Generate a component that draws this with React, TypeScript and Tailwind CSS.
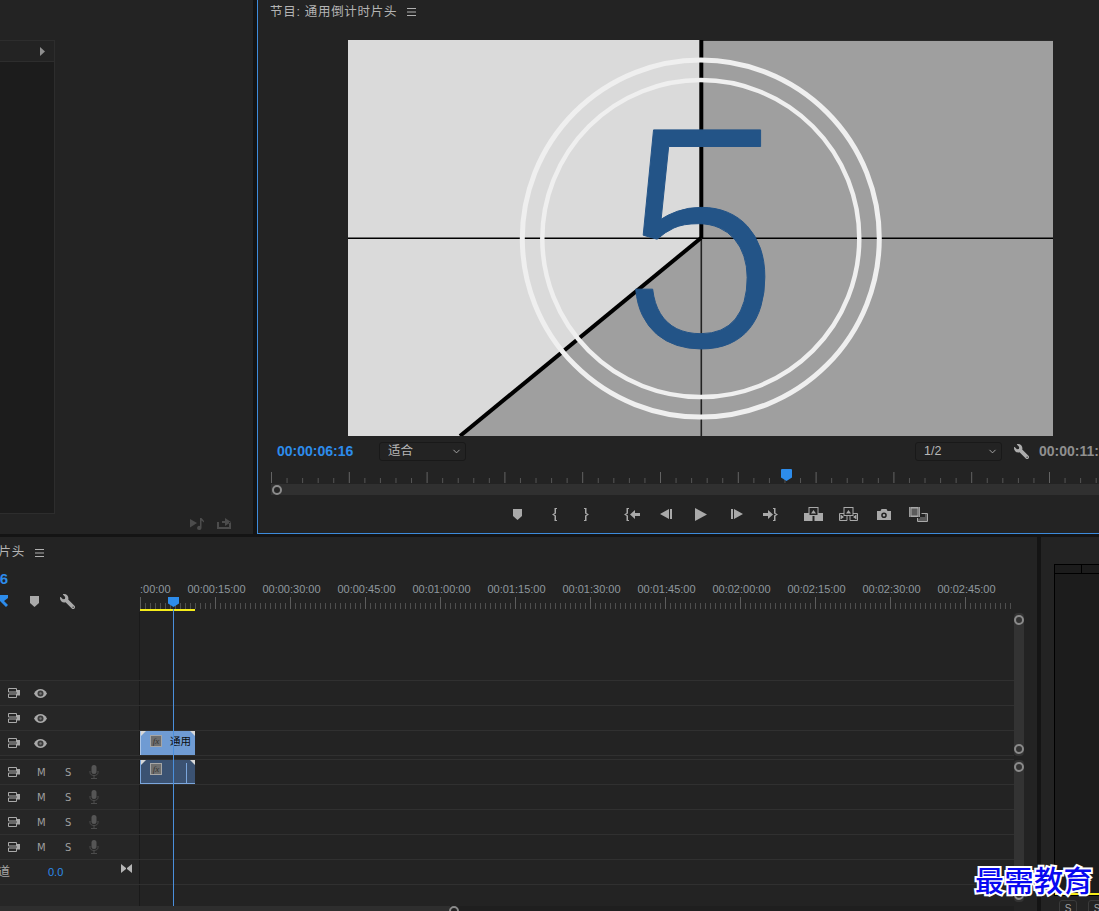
import React from "react";
import { ChevronDown } from "lucide-react";
import { FaWrench } from "react-icons/fa";

const F = "#a9a9a9";
const BG = "#232323";

const sans = "font-['Liberation_Sans','Noto_Sans_CJK_SC',sans-serif]";

function Marker({ className = "" }: { className?: string }) {
  return (
    <svg width="9" height="11" viewBox="0 0 9 11" className={className}>
      <path d="M0 0H9V7L4.5 11 0 7Z" fill={F} />
    </svg>
  );
}

function Hamburger({ className = "" }: { className?: string }) {
  return (
    <svg width="9" height="8" viewBox="0 0 9 8" className={className}>
      <path d="M0 .5H9M0 4H9M0 7.5H9" stroke="#b0b0b0" strokeWidth="1" />
    </svg>
  );
}

function Transport() {
  return (
    <div className="flex items-center h-[38px] pl-[255px]">
      <Marker />
      <svg width="5" height="13" viewBox="0 0 5 13" className="ml-[30px]">
        <path d="M5 0V1H4V5.5L2 6.5 4 7.5V12H5V13H2.5V8L0 6.5 2.5 5V0Z" fill={F} />
      </svg>
      <svg width="5" height="13" viewBox="0 0 5 13" className="ml-[27px]">
        <path d="M0 0V1H1V5.5L3 6.5 1 7.5V12H0V13H2.5V8L5 6.5 2.5 5V0Z" fill={F} />
      </svg>
      <svg width="16" height="13" viewBox="0 0 16 13" className="ml-[35px]">
        <path d="M5 0V1H4V5.5L2 6.5 4 7.5V12H5V13H2.5V8L0 6.5 2.5 5V0ZM6 6.5L11 2V5H16V8H11V11Z" fill={F} />
      </svg>
      <svg width="12" height="10" viewBox="0 0 12 10" className="ml-[20px]">
        <path d="M0 5L9 0V10ZM10 0H12V10H10Z" fill={F} />
      </svg>
      <svg width="12" height="13" viewBox="0 0 12 13" className="ml-[23px]">
        <path d="M0 0L12 6.5 0 13Z" fill={F} />
      </svg>
      <svg width="12" height="10" viewBox="0 0 12 10" className="ml-[24px]">
        <path d="M0 0H2V10H0ZM3 0L12 5 3 10Z" fill={F} />
      </svg>
      <svg width="15" height="13" viewBox="0 0 15 13" className="ml-[20px]">
        <path d="M10 6.5L5 2V5H0V8H5V11ZM10 0V1H11V5.5L13 6.5 11 7.5V12H10V13H12.5V8L15 6.5 12.5 5V0Z" fill={F} />
      </svg>
      <svg width="19" height="14" viewBox="0 0 19 14" className="ml-[26px]">
        <path d="M0 6H8.5V14H0ZM10.5 6H19V14H10.5Z" fill={F} />
        <rect x="5" y=".5" width="9" height="8" fill={BG} stroke={F} />
        <path d="M7 6.5L9.5 3 12 6.5Z" fill={F} />
      </svg>
      <svg width="19" height="14" viewBox="0 0 19 14" className="ml-[16px]">
        <path d="M.5 6.5H8V13.5H.5ZM11 6.5H18.5V13.5H11Z" fill={BG} stroke={F} />
        <path d="M1.5 7.5L5 10 1.5 12.5ZM17.5 7.5L14 10 17.5 12.5Z" fill={F} />
        <rect x="5" y=".5" width="9" height="8" fill={BG} stroke={F} />
        <path d="M7 6.5L9.5 3 12 6.5Z" fill={F} />
      </svg>
      <svg width="14" height="11" viewBox="0 0 14 11" className="ml-[19px]">
        <path
          fillRule="evenodd"
          d="M0 2H3.5L4.5 0H9.5L10.5 2H14V11H0ZM7 3.5A2.8 2.8 0 1 0 7 9.1 2.8 2.8 0 1 0 7 3.5ZM7 5A1.3 1.3 0 1 1 7 7.6 1.3 1.3 0 1 1 7 5Z"
          fill={F}
        />
      </svg>
      <svg width="19" height="15" viewBox="0 0 19 15" className="ml-[18px]">
        <path d="M0 0H11V10H0Z" fill={F} />
        <path d="M2.5 1.5H8.5V8.5H2.5Z" fill="#5c5c5c" />
        <path d="M.7 1H1.8M.7 3H1.8M.7 5H1.8M.7 7H1.8M.7 9H1.8M9.2 1H10.3M9.2 3H10.3M9.2 5H10.3M9.2 7H10.3M9.2 9H10.3" stroke={BG} strokeWidth=".7" />
        <path d="M12.5 6.5H18.5V14.5H8.5V11" fill="none" stroke={F} />
        <path d="M10 11.5V14M17 7V14M11 11H16M11 13H16" stroke={F} strokeWidth=".8" />
      </svg>
    </div>
  );
}

function MonitorRuler() {
  const ticks: React.ReactNode[] = [];
  for (let i = 0; i < 56; i++) {
    const x = 13.5 + i * 15.56;
    const major = i % 5 === 0;
    ticks.push(
      <line key={i} x1={x} x2={x} y1={major ? 2 : 8} y2={13} stroke={major ? "#636363" : "#565656"} strokeWidth="1" />
    );
  }
  return (
    <svg width="842" height="14" className="block">
      {ticks}
    </svg>
  );
}

function Picture() {
  return (
    <svg width="705" height="396" viewBox="0 0 705 396" className="block ml-[90px]">
      <rect width="705" height="396" fill="#9f9f9f" />
      <path d="M0 0H353V198L112 396H0Z" fill="#dadada" />
      <rect x="353" width="352" height="1" fill="#2a2a2a" />
      <line x1="0" x2="705" y1="198.3" y2="198.3" stroke="#000" strokeWidth="1.6" />
      <line x1="353.3" x2="353.3" y1="0" y2="198" stroke="#000" strokeWidth="4" />
      <line x1="353.3" x2="353.3" y1="198" y2="396" stroke="#222" strokeWidth="1.6" />
      <line x1="353" y1="198" x2="112" y2="396" stroke="#000" strokeWidth="4" />
      <circle cx="352.8" cy="198.6" r="178.5" fill="none" stroke="#efefef" strokeWidth="5" />
      <circle cx="352.8" cy="198.6" r="158.5" fill="none" stroke="#efefef" strokeWidth="4.5" />
      <text
        x="0"
        y="0"
        transform="translate(263 306) scale(0.99 1)"
        fontFamily="Roboto, 'Liberation Sans', sans-serif"
        fontWeight="300"
        fontSize="304"
        fill="#235487"
        stroke="#235487"
        strokeWidth="1"
      >
        5
      </text>
    </svg>
  );
}

function Select({ label, cls }: { label: string; cls: string }) {
  return (
    <div className={`w-[87px] shrink-0 ${cls} h-[19px] flex items-center justify-between pl-2 pr-[3px] rounded-[3px] border border-[#191919] text-[12.5px] text-[#b8b8b8]`}>
      <span>{label}</span>
      <ChevronDown size={11} color="#b0b0b0" />
    </div>
  );
}

function ProgramPanel() {
  return (
    <div className={`flex-1 min-w-0 h-full bg-[#232323] border-l border-b border-[#3d8bdc] overflow-hidden ${sans}`}>
      <div className="h-[40px] pl-[12px] pb-[16px] flex items-center text-[12.5px] tracking-[0.7px] text-[#b4b4b4] whitespace-nowrap">
        <span>节目: 通用倒计时片头</span>
        <Hamburger className="ml-[10px]" />
      </div>
      <Picture />
      <div className="flex items-center h-[34px] pl-[19px] pb-[3px] whitespace-nowrap">
        <span className="text-[14px] font-bold text-[#2d8ceb] w-[102px] shrink-0">00:00:06:16</span>
        <Select label="适合" cls="" />
        <Select label="1/2" cls="ml-[449px]" />
        <FaWrench size={15} color="#adadad" className="ml-[12px] shrink-0 -scale-x-100" />
        <span className="ml-[10px] shrink-0 text-[14px] font-bold text-[#8f8f8f]">00:00:11:00</span>
      </div>
      <div className="relative">
        <MonitorRuler />
        <div className="absolute left-[523px] -top-[1px] w-[11px] h-[12px] bg-[#2d8ceb] rounded-t-[1px] [clip-path:polygon(0_0,100%_0,100%_70%,50%_100%,0_70%)]" />
      </div>
      <div className="relative h-[11px] ml-[13px] bg-[#303030]">
        <div className="absolute left-[1px] top-[1px] w-[10px] h-[10px] rounded-full border-[2px] border-[#8c8c8c] bg-[#262626]" />
      </div>
      <Transport />
    </div>
  );
}

function LeftPanel() {
  return (
    <div className="w-[253px] h-full shrink-0 bg-[#232323] pt-[40px] flex flex-col">
      <div className="w-[55px] h-[474px] border-r border-t border-b border-[#2d2d2d] flex flex-col bg-[#1c1c1c]">
        <div className="h-[21px] bg-[#232323] border-b border-[#2d2d2d] flex items-center justify-end pr-[9px]">
          <svg width="5" height="9" viewBox="0 0 5 9">
            <path d="M0 0L5 4.5 0 9Z" fill="#8f8f8f" />
          </svg>
        </div>
      </div>
      <div className="flex items-center mt-[3px] h-[14px]">
        <svg width="15" height="12" viewBox="0 0 15 12" className="ml-[190px]">
          <path d="M0 1L7 5 0 9.5ZM10 0H11.5L14 3V4.5L11.5 2.5V10A2.2 2 0 1 1 10 8Z" fill="#4c4c4c" />
        </svg>
        <svg width="15" height="12" viewBox="0 0 15 12" className="ml-[12px]">
          <path d="M0 4V11H14V4H12V9H2V4ZM5 3H8V0L14 4 8 8V5H5Z" fill="#4c4c4c" />
        </svg>
      </div>
    </div>
  );
}

function SyncIcon() {
  return (
    <svg width="12" height="10" viewBox="0 0 12 10">
      <path d="M.5 .5H8.5V4H.5ZM.5 6H8.5V9.5H.5Z" fill="none" stroke="#a9a9a9" />
      <path d="M8.5 2H12V7.5H8.5Z" fill="#a9a9a9" />
    </svg>
  );
}

function Eye() {
  return (
    <svg width="13" height="9" viewBox="0 0 13 9" className="ml-[14px]">
      <path d="M0 4.5C2 1 4 0 6.5 0S11 1 13 4.5C11 8 9 9 6.5 9S2 8 0 4.5Z" fill="#a9a9a9" />
      <circle cx="6.5" cy="4.5" r="3" fill="#3a3a3a" />
      <circle cx="6.5" cy="4.5" r="1.2" fill="#777" />
    </svg>
  );
}

function Mic() {
  return (
    <svg width="10" height="14" viewBox="0 0 10 14" className="ml-[18px]">
      <rect x="2.5" y="0" width="5" height="9" rx="2.5" fill="#555" />
      <path d="M1 6V7.5C1 9.5 3 10.5 5 10.5S9 9.5 9 7.5V6M5 10.5V13M2 13.5H8" fill="none" stroke="#4c4c4c" />
    </svg>
  );
}

function FxBox() {
  return (
    <div className="w-[12px] h-[12px] bg-[#6e6e6e] border border-[#a5a5a5] flex items-center justify-center font-['Liberation_Serif',serif] italic text-[9px] leading-none text-[#333]">
      fx
    </div>
  );
}

function Corners() {
  return (
    <>
      <div className="absolute left-0 top-0 w-[5px] h-[5px] bg-[#d8d8d8] [clip-path:polygon(0_0,100%_0,0_100%)]" />
      <div className="absolute right-0 top-0 w-[5px] h-[5px] bg-[#d8d8d8] [clip-path:polygon(0_0,100%_0,100%_100%)]" />
    </>
  );
}

function VRow({ clip }: { clip?: boolean }) {
  return (
    <div className="flex h-[25px] border-b border-[#303030]">
      <div className="w-[140px] shrink-0 border-r border-[#1a1a1a] bg-[#262626] flex items-center pl-[8px]">
        <SyncIcon />
        <Eye />
      </div>
      <div className="flex-1">
        {clip && (
          <div className="relative w-[55px] h-full bg-[#6f9bd3] flex items-start pl-[9px] pt-[4px] border-l border-[#a9c4e6] overflow-hidden">
            <FxBox />
            <span className="ml-[8px] text-[10.5px] leading-[12px] text-[#0b0b0b] whitespace-nowrap">通用</span>
            <Corners />
          </div>
        )}
      </div>
    </div>
  );
}

function ARow({ clip }: { clip?: boolean }) {
  return (
    <div className="flex h-[25px] border-b border-[#303030]">
      <div className="w-[140px] shrink-0 border-r border-[#1a1a1a] bg-[#262626] flex items-center pl-[8px] text-[10px] text-[#9f9f9f] font-['DejaVu_Sans',sans-serif]">
        <SyncIcon />
        <span className="ml-[17px] w-[8px]">M</span>
        <span className="ml-[20px] w-[6px]">S</span>
        <Mic />
      </div>
      <div className="flex-1">
        {clip && (
          <div className="relative w-[55px] h-[24px] bg-[#3b5272] border-l border-b border-[#7ba6dc] pl-[9px] pt-[3px] overflow-hidden">
            <FxBox />
            <div className="absolute left-[45px] top-[3px] bottom-0 w-[1px] bg-[#7ba6dc]" />
            <Corners />
          </div>
        )}
      </div>
    </div>
  );
}

function TimelineRuler() {
  const ticks: React.ReactNode[] = [];
  for (let i = 0; i < 175; i++) {
    const x = 0.5 + i * 5;
    const major = i % 15 === 0;
    ticks.push(
      <line key={i} x1={x} x2={x} y1={major ? 0 : 6} y2={12} stroke={major ? "#5c5c5c" : "#4e4e4e"} strokeWidth="1" />
    );
  }
  return (
    <svg width="874" height="14" className="block">
      {ticks}
      <rect x="0" y="12" width="55" height="2" fill="#f5ec1a" />
    </svg>
  );
}

const labels = [
  "00:00:00:00", "00:00:15:00", "00:00:30:00", "00:00:45:00", "00:01:00:00", "00:01:15:00",
  "00:01:30:00", "00:01:45:00", "00:02:00:00", "00:02:15:00", "00:02:30:00", "00:02:45:00",
];

function Scrollbar({ h }: { h: string }) {
  return (
    <div className={`${h} w-[10px] bg-[#333] rounded-[4px] flex flex-col justify-between py-[2px]`}>
      <div className="w-[10px] h-[10px] rounded-full border-[2.5px] border-[#8a8a8a]" />
      <div className="w-[10px] h-[10px] rounded-full border-[2.5px] border-[#8a8a8a]" />
    </div>
  );
}

function Timeline() {
  return (
    <div className={`relative w-[1037px] shrink-0 h-full bg-[#232323] flex overflow-hidden ${sans}`}>
      <div className="w-[1014px] shrink-0 flex flex-col">
        <div className="h-[30px] flex items-center text-[12.5px] tracking-[0.7px] text-[#b4b4b4] pt-[1px]">
          <div className="w-[25px] flex justify-end overflow-hidden whitespace-nowrap">
            <span className="shrink-0">通用倒计时片头</span>
          </div>
          <Hamburger className="ml-[10px]" />
        </div>
        <div className="h-[114px] flex border-b border-[#303030]">
          <div className="w-[140px] shrink-0 h-[113px] flex flex-col">
            <div className="h-[23px] w-[8px] flex justify-end overflow-hidden pt-[1px] whitespace-nowrap">
              <span className="shrink-0 text-[15px] font-bold text-[#2d8ceb]">00:00:06:16</span>
            </div>
            <div className="flex items-center h-[22px]">
              <svg width="8" height="12" viewBox="0 0 8 12">
                <path d="M0 0H8V3L4 6 8 10 6 12 0 6Z" fill="#2d8ceb" />
              </svg>
              <Marker className="ml-[22px]" />
              <FaWrench size={15} color="#a9a9a9" className="ml-[21px] -scale-x-100" />
            </div>
            <div className="flex-1 border-r border-[#1a1a1a]" />
          </div>
          <div className="flex-1 min-w-0 overflow-hidden">
            <div className="h-[15px]" />
            <div className="h-[14px] flex -ml-[36px] text-[11px] leading-[14px] text-[#8f989f] whitespace-nowrap">
              {labels.map((l) => (
                <span key={l} className="w-[75px] shrink-0 text-center">{l}</span>
              ))}
            </div>
            <div className="relative mt-[1px]">
              <TimelineRuler />
              <div className="absolute left-[28px] top-0 w-[11px] h-[10px] bg-[#2d8ceb] [clip-path:polygon(0_0,100%_0,100%_65%,50%_100%,0_65%)]" />
            </div>
          </div>
        </div>
        <VRow />
        <VRow />
        <VRow clip />
        <div className="h-[4px] border-b border-[#303030] bg-[#232323]" />
        <ARow clip />
        <ARow />
        <ARow />
        <ARow />
        <div className="flex h-[25px] border-b border-[#303030]">
          <div className="w-[140px] shrink-0 border-r border-[#1a1a1a] bg-[#262626] flex items-center">
            <div className="w-[10px] flex justify-end overflow-hidden whitespace-nowrap text-[12.5px] text-[#a5a5a5]">
              <span className="shrink-0">主声道</span>
            </div>
            <span className="ml-[38px] text-[11px] text-[#2d8ceb]">0.0</span>
            <svg width="11" height="9" viewBox="0 0 11 9" className="ml-[58px] -mt-[8px]">
              <path d="M0 0L5 4 5 5 0 9ZM11 0L6 4 6 5 11 9Z" fill="#b5b5b5" />
            </svg>
          </div>
        </div>
        <div className="flex h-[21px]">
          <div className="w-[140px] shrink-0 border-r border-[#1a1a1a] bg-[#262626]" />
        </div>
        <div className="flex-1 relative bg-[#1f1f1f] overflow-visible">
          <div className="w-[450px] h-full bg-[#2e2e2e]" />
          <div className="absolute left-[449px] top-0 w-[10px] h-[10px] rounded-full border-[2.5px] border-[#8a8a8a]" />
        </div>
      </div>
      <div className="flex-1 flex flex-col pt-[76px]">
        <Scrollbar h="h-[143px]" />
        <div className="h-[4px]" />
        <Scrollbar h="h-[142px]" />
      </div>
      <div className="absolute left-[173px] top-[72px] bottom-[5px] w-[1px] bg-[#4a8fdc]" />
    </div>
  );
}

function RightPanel() {
  return (
    <div className={`flex-1 min-w-0 h-full bg-[#232323] pl-[13px] pt-[27px] overflow-hidden ${sans}`}>
      <div className="h-[332px] w-[100px] border border-black bg-[#1c1c1c] flex flex-col">
        <div className="h-[9px] border-b border-black flex">
          <div className="w-[27px] border-r border-black" />
        </div>
        <div className="flex-1" />
        <div className="h-[2px] bg-[#f5ec1a]" />
      </div>
      <div className="flex gap-[11px] pl-[5px] pt-[4px]">
        <div className="w-[18px] h-[14px] shrink-0 rounded-[3px] border border-[#3a3a3a] text-center text-[10px] leading-[16px] text-[#a5a5a5]">S</div>
        <div className="w-[18px] h-[14px] shrink-0 rounded-[3px] border border-[#3a3a3a] text-center text-[10px] leading-[16px] text-[#a5a5a5]">S</div>
      </div>
    </div>
  );
}

export default function App() {
  return (
    <div className="relative w-[1099px] h-[911px] overflow-hidden bg-[#141414] flex flex-col">
      <div className="h-[534px] shrink-0 flex gap-[4px]">
        <LeftPanel />
        <ProgramPanel />
      </div>
      <div className="h-[374px] mt-[3px] flex gap-[4px]">
        <Timeline />
        <RightPanel />
      </div>
      <div className="absolute left-[975px] top-[860px] text-[29px] leading-[38px] font-medium text-[#0808f0] tracking-[0.5px] whitespace-nowrap font-['Noto_Sans_CJK_TC','Noto_Sans_CJK_SC',sans-serif] [-webkit-text-stroke:4px_white] [paint-order:stroke_fill]">
        最需教育
      </div>
    </div>
  );
}
